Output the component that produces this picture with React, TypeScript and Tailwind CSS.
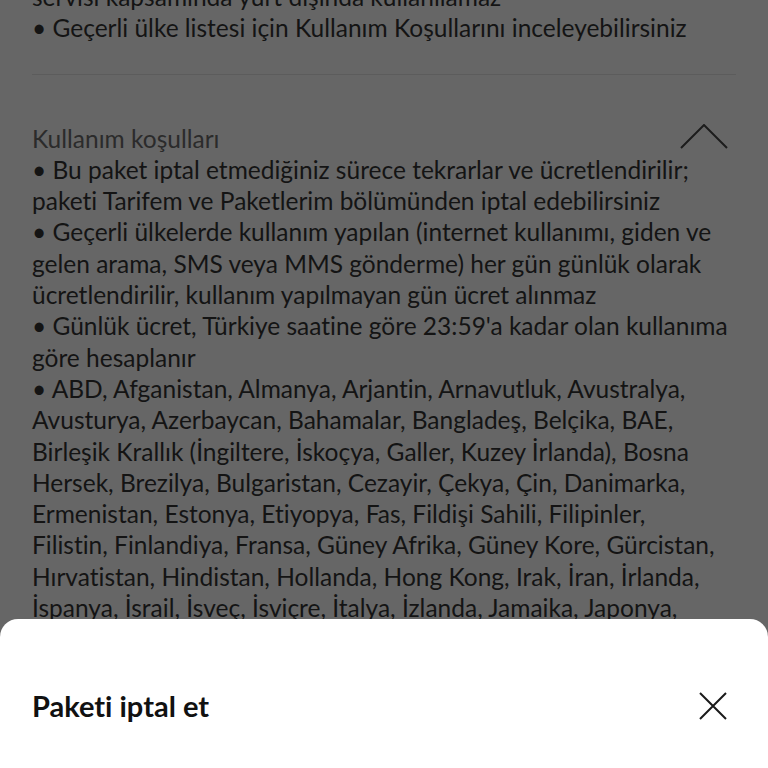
import React from 'react';

const topLines = [
  'servisi kapsamında yurt dışında kullanılamaz',
  '• Geçerli ülke listesi için Kullanım Koşullarını inceleyebilirsiniz',
];

const termLines = [
  '• Bu paket iptal etmediğiniz sürece tekrarlar ve ücretlendirilir;',
  'paketi Tarifem ve Paketlerim bölümünden iptal edebilirsiniz',
  '• Geçerli ülkelerde kullanım yapılan (internet kullanımı, giden ve',
  'gelen arama, SMS veya MMS gönderme) her gün günlük olarak',
  'ücretlendirilir, kullanım yapılmayan gün ücret alınmaz',
  "• Günlük ücret, Türkiye saatine göre 23:59'a kadar olan kullanıma",
  'göre hesaplanır',
  '• ABD, Afganistan, Almanya, Arjantin, Arnavutluk, Avustralya,',
  'Avusturya, Azerbaycan, Bahamalar, Bangladeş, Belçika, BAE,',
  'Birleşik Krallık (İngiltere, İskoçya, Galler, Kuzey İrlanda), Bosna',
  'Hersek, Brezilya, Bulgaristan, Cezayir, Çekya, Çin, Danimarka,',
  'Ermenistan, Estonya, Etiyopya, Fas, Fildişi Sahili, Filipinler,',
  'Filistin, Finlandiya, Fransa, Güney Afrika, Güney Kore, Gürcistan,',
  'Hırvatistan, Hindistan, Hollanda, Hong Kong, Irak, İran, İrlanda,',
  'İspanya, İsrail, İsveç, İsviçre, İtalya, İzlanda, Jamaika, Japonya,',
  'Kanada, Karadağ, Katar, Kazakistan, Kenya, Kıbrıs, Kolombiya,',
];

function ChevronUp() {
  return (
    <svg width="48" height="26" viewBox="0 0 48 26" fill="none" className="shrink-0">
      <path d="M1 24L24 1L47 24" stroke="#1c1c1c" strokeWidth="2" />
    </svg>
  );
}

function CloseIcon() {
  return (
    <svg width="30" height="30" viewBox="0 0 30 30" fill="none">
      <path d="M2 2L28 28M28 2L2 28" stroke="#1a1a1a" strokeWidth="2" />
    </svg>
  );
}

export default function App() {
  return (
    <div
      className="relative h-[768px] w-[768px] overflow-hidden bg-[#666666] [font-variant-ligatures:none]"
      style={{ fontFamily: 'Lato, "Open Sans", sans-serif' }}
    >
      <div className="-mt-[19px] px-8 text-[24.5px] leading-[31.3px] text-[#141414]">
        {topLines.map((line, i) => (
          <div key={i} className="whitespace-nowrap">{line}</div>
        ))}
        <div className="mt-[30px] mb-[48px] h-px bg-[#5c5c5c]" />
        <div className="flex items-end justify-between">
          <span className="text-[#2b2b2b]">Kullanım koşulları</span>
          <div className="mb-[4px] mr-[8px]">
            <ChevronUp />
          </div>
        </div>
        {termLines.map((line, i) => (
          <div key={i} className="whitespace-nowrap">{line}</div>
        ))}
      </div>

      {/* bottom sheet */}
      <div className="absolute inset-x-0 bottom-0 h-[149px] rounded-t-[18px] bg-white">
        <div className="flex items-center justify-between pl-8 pr-[40px] pt-[71px]">
          <h2 className="text-[29px] font-bold leading-[32px] text-[#111]">Paketi iptal et</h2>
          <CloseIcon />
        </div>
      </div>
    </div>
  );
}
